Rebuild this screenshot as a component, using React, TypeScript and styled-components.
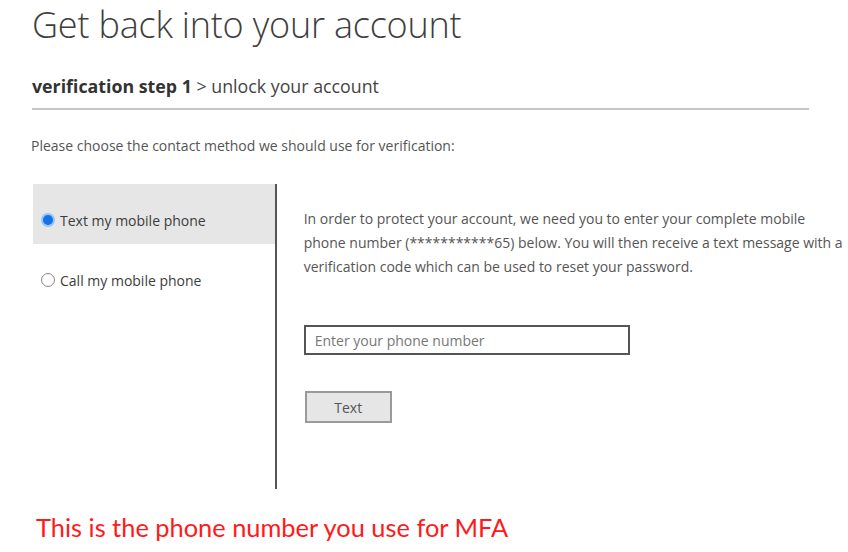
import React, { useState } from "react";
import styled, { createGlobalStyle } from "styled-components";

const GlobalStyle = createGlobalStyle`
  html, body {
    margin: 0;
    padding: 0;
    background: #ffffff;
  }
  body {
    font-family: "Open Sans", "Noto Sans", sans-serif;
    color: #333;
  }
`;

const Page = styled.div`
  width: 848px;
  height: 552px;
  padding-left: 32px;
  box-sizing: border-box;
  overflow: hidden;
`;

const Title = styled.h1`
  margin: 0;
  font-size: 36px;
  font-weight: 300;
  line-height: 50px;
  color: #3e3e3e;
  letter-spacing: -0.2px;
`;

const Breadcrumb = styled.div`
  margin-top: 25px;
  width: 777px;
  padding-bottom: 11px;
  border-bottom: 2px solid #c6c6c6;
  font-size: 17.8px;
  line-height: 22px;
  color: #444;
  b {
    font-weight: 700;
    color: #333;
  }
`;

const Prompt = styled.p`
  margin: 27px 0 0 -1px;
  font-size: 14px;
  line-height: 18px;
  color: #555;
`;

const Methods = styled.div`
  display: flex;
  margin-top: 29px;
  margin-left: 1px;
`;

const Options = styled.div`
  width: 242px;
  height: 305px;
  border-right: 2px solid #555;
`;

const Option = styled.label<{ $active: boolean }>`
  display: flex;
  align-items: center;
  gap: 5px;
  height: 60px;
  box-sizing: border-box;
  padding: 12px 0 0 8px;
  background: ${(p) => (p.$active ? "#e6e6e6" : "transparent")};
  font-size: 14px;
  color: #3c3c3c;
  cursor: pointer;
`;

const Radio = styled.span<{ $checked: boolean }>`
  width: 14px;
  height: 14px;
  border-radius: 50%;
  box-sizing: border-box;
  border: ${(p) => (p.$checked ? "2px solid #93c5f5" : "1.5px solid #8a8a8a")};
  background: ${(p) => (p.$checked ? "#1670e6" : "#fff")};
  flex-shrink: 0;
`;

const Detail = styled.div`
  padding: 23px 0 0 27px;
  width: 545px;
`;

const Info = styled.p`
  margin: 0;
  font-size: 14px;
  line-height: 24px;
  color: #555;
`;

const PhoneInput = styled.input`
  display: block;
  margin-top: 46px;
  width: 326px;
  height: 30px;
  box-sizing: border-box;
  border: 2px solid #555;
  padding: 0 9px;
  font-family: inherit;
  font-size: 14px;
  color: #333;
  outline: none;
  &::placeholder {
    color: #777;
  }
`;

const SendButton = styled.button`
  display: block;
  margin-top: 36px;
  margin-left: 1px;
  width: 87px;
  height: 32px;
  background: #e6e6e6;
  border: 2px solid #9a9a9a;
  font-family: inherit;
  font-size: 14px;
  color: #555;
`;

const Note = styled.div`
  margin-top: 23px;
  margin-left: 4px;
  font-family: "Lato", "Open Sans", sans-serif;
  font-size: 25.4px;
  line-height: 30px;
  color: #ff1a1a;
`;

export default function App() {
  const [method, setMethod] = useState("text");
  return (
    <Page>
      <GlobalStyle />
      <Title>Get back into your account</Title>
      <Breadcrumb>
        <b>verification step 1</b> &gt; unlock your account
      </Breadcrumb>
      <Prompt>Please choose the contact method we should use for verification:</Prompt>
      <Methods>
        <Options>
          <Option $active={method === "text"} onClick={() => setMethod("text")}>
            <Radio $checked={method === "text"} />
            Text my mobile phone
          </Option>
          <Option $active={false} onClick={() => setMethod("call")}>
            <Radio $checked={method === "call"} />
            Call my mobile phone
          </Option>
        </Options>
        <Detail>
          <Info>
            In order to protect your account, we need you to enter your complete mobile
            phone number (***********65) below. You will then receive a text message with a
            verification code which can be used to reset your password.
          </Info>
          <PhoneInput placeholder="Enter your phone number" />
          <SendButton>Text</SendButton>
        </Detail>
      </Methods>
      <Note>This is the phone number you use for MFA</Note>
    </Page>
  );
}
